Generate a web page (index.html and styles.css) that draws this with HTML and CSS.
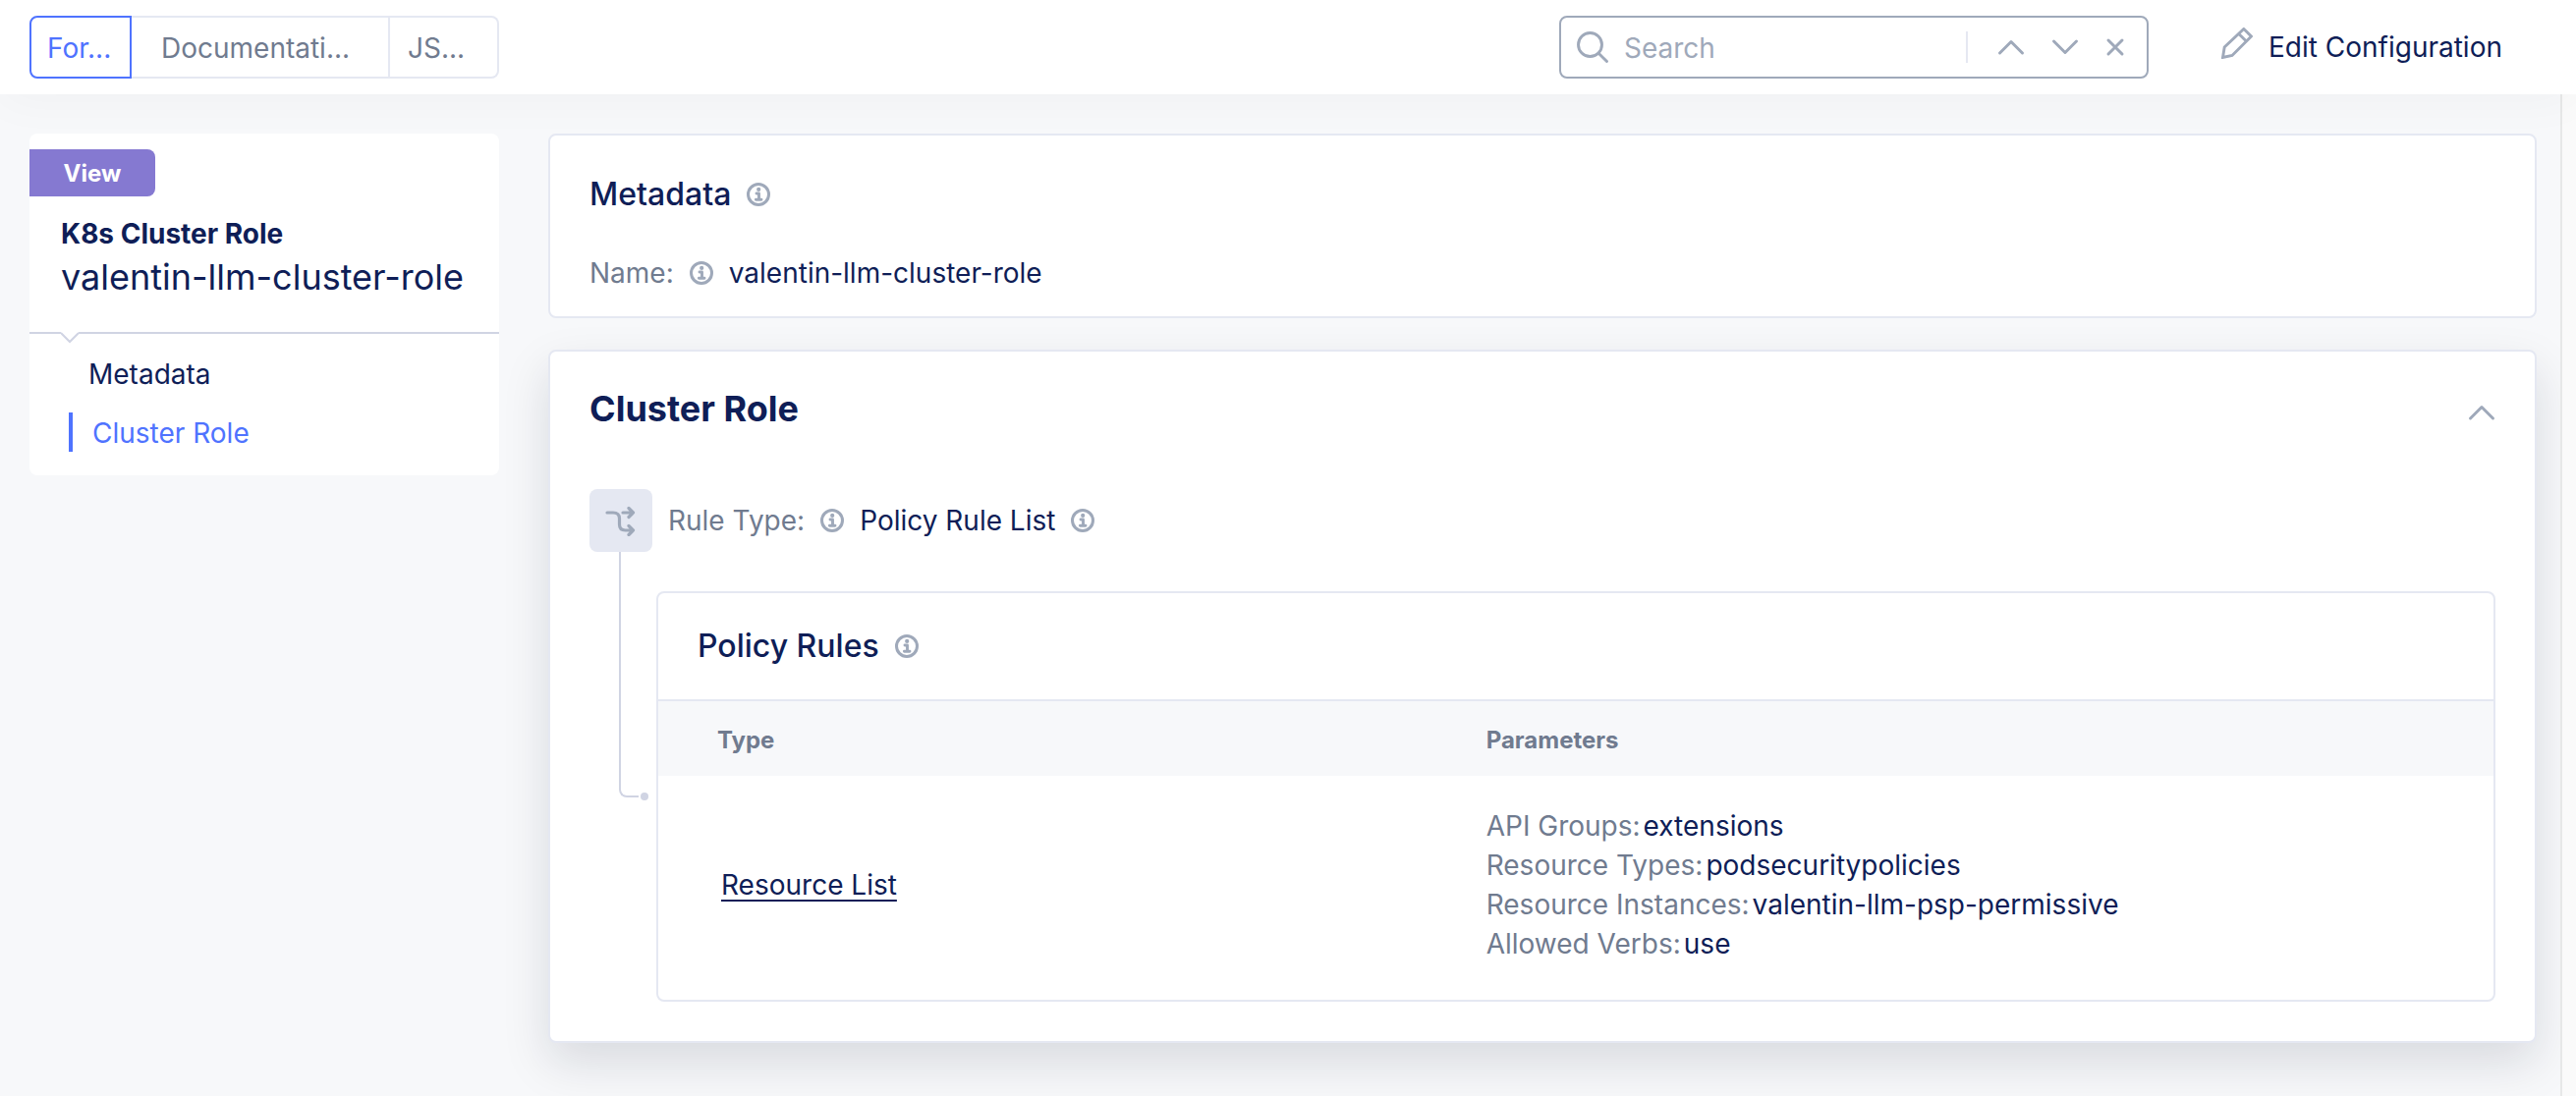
FILE: index.html
```html
<!DOCTYPE html>
<html lang="en">
<head>
<meta charset="utf-8">
<meta name="viewport" content="width=device-width, initial-scale=1">
<title>K8s Cluster Role</title>
<link rel="stylesheet" href="styles.css">
</head>
<body>
<svg class="sprite" aria-hidden="true">
  <symbol id="info" viewBox="0 0 24 24">
    <circle cx="12" cy="12" r="10.5" stroke-width="3"/>
    <circle cx="12.2" cy="6.9" r="2.1" fill="currentColor" stroke="none"/>
    <path d="M10 11h2.500v6M9.400 17.200h5.600" stroke-width="2.900"/>
  </symbol>
  <symbol id="chevron-up" viewBox="0 0 28 28"><path d="M2.500 20 14 8.500 25.500 20" stroke-width="3"/></symbol>
</svg>

<header class="topbar">
  <nav class="tabs" aria-label="Views">
    <button class="tab tab-form active" type="button">For...</button>
    <button class="tab tab-docs" type="button">Documentati...</button>
    <button class="tab tab-json" type="button">JS...</button>
  </nav>
  <form class="search" role="search">
    <svg class="icon icon-search" viewBox="0 0 32 32" aria-hidden="true"><circle cx="13.500" cy="13.500" r="12" stroke-width="2.900"/><path d="m22.200 22.200 8.300 8.300" stroke-width="2.900"/></svg>
    <input class="search-input" type="text" placeholder="Search" aria-label="Search">
    <span class="search-actions">
      <button class="icon-button" type="button" aria-label="Previous match"><svg class="icon icon-chevron"><use href="#chevron-up"/></svg></button>
      <button class="icon-button" type="button" aria-label="Next match"><svg class="icon icon-chevron flipped"><use href="#chevron-up"/></svg></button>
      <button class="icon-button" type="button" aria-label="Clear search"><svg class="icon icon-close" viewBox="0 0 20 20"><path d="m3 3 14 14M17 3 3 17" stroke-width="3"/></svg></button>
    </span>
  </form>
  <button class="edit" type="button">
    <svg class="icon icon-pencil" viewBox="0 0 32 32" aria-hidden="true"><path d="M1.500 30.500 3.200 20 22.800 1.500 30.500 9 11 28.500ZM17.800 6.500l7.600 7.500" stroke-width="2.900" stroke-linejoin="miter"/></svg>
    <span>Edit Configuration</span>
  </button>
</header>

<div class="page">
  <aside class="sidebar">
    <div class="summary">
      <span class="badge">View</span>
      <h1 class="kind">K8s Cluster Role</h1>
      <p class="object-name">valentin-llm-cluster-role</p>
      <svg class="notch" viewBox="0 0 18 12" aria-hidden="true"><path d="M0 0h18v2L9 11 0 2Z" fill="#fff" stroke="none"/><path d="m0 1 9 9 9-9" stroke-width="2"/></svg>
    </div>
    <nav class="sections" aria-label="Sections">
      <a class="section-link" href="#metadata">Metadata</a>
      <a class="section-link current" href="#cluster-role">Cluster Role</a>
    </nav>
  </aside>

  <main class="content">
    <section class="card" id="metadata">
      <h2 class="heading">Metadata <svg class="icon icon-info"><use href="#info"/></svg></h2>
      <div class="field">
        <span class="label">Name:</span>
        <svg class="icon icon-info"><use href="#info"/></svg>
        <span>valentin-llm-cluster-role</span>
      </div>
    </section>

    <section class="card card-raised" id="cluster-role">
      <div class="card-head">
        <h2 class="heading heading-large">Cluster Role</h2>
        <button class="icon-button" type="button" aria-label="Collapse"><svg class="icon icon-chevron"><use href="#chevron-up"/></svg></button>
      </div>
      <div class="field">
        <span class="choice">
          <svg class="icon icon-choice" viewBox="0 0 32 32" aria-hidden="true"><path d="M2 8H8Q14.500 8 14.500 14V20Q14.500 26 20.500 26H28.500M18 8H28.500M24 3.500 28.500 8l-4.500 4.500M24 21.500 28.500 26l-4.500 4.500" stroke-width="3.200"/></svg>
        </span>
        <span class="label">Rule Type:</span>
        <svg class="icon icon-info"><use href="#info"/></svg>
        <span>Policy Rule List</span>
        <svg class="icon icon-info"><use href="#info"/></svg>
      </div>
      <div class="branch">
        <div class="connector"></div>
        <div class="rules">
          <h3 class="heading rules-title">Policy Rules <svg class="icon icon-info"><use href="#info"/></svg></h3>
          <table class="rules-table">
            <thead>
              <tr><th class="col-type" scope="col">Type</th><th scope="col">Parameters</th></tr>
            </thead>
            <tbody>
              <tr>
                <td><a class="resource-link" href="#resource-list">Resource List</a></td>
                <td>
                  <ul class="params">
                    <li><span class="label">API Groups:</span><span>extensions</span></li>
                    <li><span class="label">Resource Types:</span><span>podsecuritypolicies</span></li>
                    <li><span class="label">Resource Instances:</span><span>valentin-llm-psp-permissive</span></li>
                    <li><span class="label">Allowed Verbs:</span><span>use</span></li>
                  </ul>
                </td>
              </tr>
            </tbody>
          </table>
        </div>
      </div>
    </section>
  </main>
  <div class="scroll-track"></div>
</div>
</body>
</html>
```

FILE: styles.css
```css
:root {
  --navy: #0f1e57;
  --muted: #707b8f;
  --icon: #9fa9ba;
  --blue: #4f73ff;
  --border: #e5e8f2;
  --line: #d0d4e3;
  --surface: #f7f8fa;
  --sidebar-width: 478px;
}

* { box-sizing: border-box; }

body {
  display: flex;
  flex-direction: column;
  min-height: 100vh;
  margin: 0;
  background: var(--surface);
  color: var(--navy);
  font: 400 28px/40px Inter, "Liberation Sans", sans-serif;
}

h1, h2, h3, p, ul { margin: 0; padding: 0; }
ul { list-style: none; }
button, input { font: inherit; color: inherit; }
button { padding: 0; border: 0; background: none; }
a { color: inherit; text-decoration: none; }

.sprite { position: absolute; width: 0; height: 0; }

.icon {
  display: block;
  flex: none;
  color: var(--icon);
  fill: none;
  stroke: currentColor;
  stroke-linecap: round;
  stroke-linejoin: round;
}
.icon-info { width: 24px; height: 24px; }
.icon-search, .icon-pencil, .icon-choice { width: 32px; height: 32px; }
.icon-chevron { width: 28px; height: 28px; }
.icon-close { width: 20px; height: 20px; }
.flipped { transform: rotate(180deg); }
.icon-button { display: flex; }

/* Top bar */
.topbar {
  position: relative;
  z-index: 1;
  display: flex;
  align-items: center;
  padding: 16px 75px 16px 30px;
  background: #fff;
  box-shadow: 0 8px 48px rgba(0, 0, 0, 0.03);
}

.tabs { display: flex; width: var(--sidebar-width); }
.tab {
  height: 64px;
  padding-top: 2px;
  border: 2px solid var(--border);
  border-left-width: 0;
  color: var(--muted);
  text-align: left;
  white-space: nowrap;
}
.tab-form { flex: 0 0 104px; padding-left: 16px; border-radius: 8px 0 0 8px; }
.tab-docs { flex: 1; padding-left: 30px; }
.tab-json { flex: 0 0 111px; padding-left: 18px; border-radius: 0 8px 8px 0; }
.tab.active { border: 2px solid var(--blue); color: var(--blue); }

.search {
  display: flex;
  align-items: center;
  gap: 16px;
  width: 600px;
  height: 64px;
  margin-left: auto;
  padding: 0 22px 0 16px;
  border: 2px solid var(--icon);
  border-radius: 8px;
}
.search-input {
  flex: 1;
  min-width: 0;
  height: 40px;
  padding: 2px 0 0;
  border: 0;
  outline: 0;
  background: none;
}
.search-input::placeholder { color: var(--icon); opacity: 1; }
.search-actions {
  display: flex;
  align-items: center;
  justify-content: space-between;
  width: 162px;
  height: 32px;
  padding-left: 30px;
  border-left: 2px solid var(--border);
}

.edit {
  display: flex;
  gap: 16px;
  margin-left: 74px;
}

/* Page */
.page { display: flex; flex: 1; padding-left: 30px; }

.sidebar { flex: none; width: var(--sidebar-width); padding-top: 40px; }
.summary {
  position: relative;
  padding: 16px 0 30px;
  border-bottom: 2px solid var(--line);
  border-radius: 8px 8px 0 0;
  background: #fff;
}
.badge {
  display: block;
  width: 128px;
  padding-top: 2px;
  border-radius: 0 8px 8px 0;
  background: #8579d1;
  color: #fff;
  font-size: 24px;
  font-weight: 700;
  line-height: 46px;
  text-align: center;
}
.kind {
  margin-top: 20px;
  padding-left: 32px;
  font-size: 28px;
  font-weight: 700;
  line-height: 36px;
}
.object-name { padding-left: 32px; font-size: 36px; line-height: 52px; }
.notch {
  position: absolute;
  top: 100%;
  left: 32px;
  width: 18px;
  height: 12px;
  fill: none;
  stroke: var(--line);
}
.sections {
  display: flex;
  flex-direction: column;
  gap: 20px;
  padding: 20px 0 24px 40px;
  border-radius: 0 0 8px 8px;
  background: #fff;
}
.section-link { padding: 2px 0 0 20px; line-height: 38px; }
.section-link.current { border-left: 4px solid var(--blue); color: var(--blue); }

.content {
  display: flex;
  flex: 1;
  flex-direction: column;
  gap: 32px;
  min-width: 0;
  padding: 40px 24px 54px 50px;
}
.card {
  padding: 38px 40px 24px;
  border: 2px solid var(--border);
  border-radius: 8px;
  background: #fff;
}
.card-raised {
  padding: 36px 40px 40px;
  box-shadow: 0 20px 48px rgba(16, 20, 45, 0.13);
}
.card-head {
  display: flex;
  align-items: flex-end;
  justify-content: space-between;
  padding-bottom: 60px;
}
.card-head .icon-button { height: 32px; }

.heading {
  display: flex;
  align-items: center;
  gap: 16px;
  font-size: 32px;
  font-weight: 500;
  line-height: 44px;
}
.heading-large { font-size: 36px; font-weight: 700; }

.field { display: flex; align-items: center; gap: 16px; }
.heading + .field { margin-top: 38px; }
.label { color: var(--muted); }

.choice {
  display: grid;
  place-items: center;
  width: 64px;
  height: 64px;
  border-radius: 8px;
  background: var(--border);
}

.branch { display: grid; grid-template-columns: 68px 1fr; }
.connector {
  position: relative;
  width: 20px;
  height: calc(50% + 21px);
  margin-left: 30px;
  border: solid var(--line);
  border-width: 0 0 2px 2px;
  border-bottom-left-radius: 8px;
}
.connector::after {
  content: "";
  position: absolute;
  right: -10px;
  bottom: -5px;
  width: 8px;
  height: 8px;
  border-radius: 50%;
  background: var(--line);
}

.rules {
  margin-top: 40px;
  padding-bottom: 6px;
  border: 2px solid var(--border);
  border-radius: 8px;
}
.rules-title { padding: 32px 40px; border-bottom: 2px solid var(--border); }
.rules-table { width: 100%; border-collapse: collapse; table-layout: fixed; }
.col-type { width: 41.9%; }
th {
  padding: 24px 60px 20px;
  background: var(--surface);
  color: var(--muted);
  font-size: 24px;
  font-weight: 700;
  line-height: 32px;
  text-align: left;
}
td { padding: 31px 60px; }
.resource-link {
  margin-left: 4px;
  text-decoration: underline 2px;
  text-underline-offset: 5px;
}
.params li { display: flex; gap: 3px; }

.scroll-track {
  flex: none;
  width: 16px;
  border-left: 2px solid #e7e8e8;
  background: #fafafa;
}
```
